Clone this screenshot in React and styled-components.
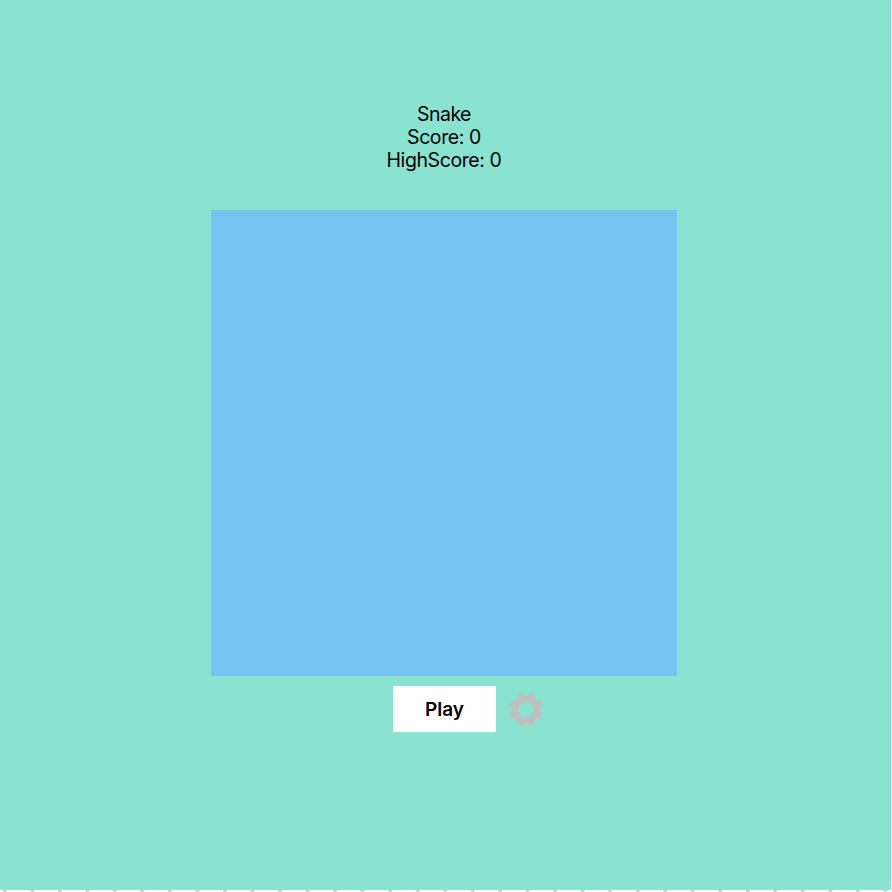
import React from "react";
import styled, { createGlobalStyle } from "styled-components";

const GlobalStyle = createGlobalStyle`
  body { margin: 0; background: #fff; overflow: hidden; }
  * { box-sizing: border-box; }
`;

const Page = styled.main`
  width: 891px;
  height: 890px;
  padding: 103px 3px 0 0;
  display: flex;
  flex-direction: column;
  align-items: center;
  background: #8ae2d0;
  color: #000;
  font-family: Inter, "Liberation Sans", sans-serif;
`;

const Scoreboard = styled.header`
  display: flex;
  flex-direction: column;
  align-items: center;
  height: 107px;
  font-size: 19.5px;
  line-height: 23px;
`;

const Line = styled.div`
  white-space: pre;
  letter-spacing: ${(p) => p.$spacing || 0}px;
`;

const Board = styled.section`
  width: 466px;
  height: 466px;
  background: #75c3f1;
`;

const Controls = styled.div`
  display: grid;
  grid-template-columns: 1fr 103px 1fr;
  align-items: center;
  width: 465px;
  margin: 10px 0 0 1px;
`;

const PlayButton = styled.button`
  grid-column: 2;
  height: 46px;
  padding: 1px 0 0;
  border: 0;
  background: #fff;
  color: #000;
  font: 600 19px/45px Inter, "Liberation Sans", sans-serif;
`;

const SettingsButton = styled.button`
  display: flex;
  width: 34px;
  margin: 0 0 0 13px;
  padding: 0;
  border: 0;
  background: none;
  color: #c0c0c0;
`;

const Footer = styled.div`
  width: 891px;
  height: 2px;
  background: radial-gradient(ellipse 2.8px 2.6px at 4.8px 0, #cecece 60%, #fff 100%) 0 0 / 27.53px 2px repeat-x;
`;

const teeth = [22.5, 67.5, 112.5, 157.5, 202.5, 247.5, 292.5, 337.5];

function Gear() {
  return (
    <svg width="34" height="34" viewBox="-17 -17.4 34 34" fill="currentColor">
      <circle r="10.7" fill="none" stroke="currentColor" strokeWidth="6" />
      {teeth.map((angle) => (
        <path
          key={angle}
          transform={`rotate(${angle})`}
          d="M-4-11.5L-3.2-16Q-3-16.8-2.2-16.8H2.2Q3-16.8 3.2-16L4-11.5Z"
        />
      ))}
    </svg>
  );
}

export default function App() {
  return (
    <>
      <GlobalStyle />
      <Page>
        <Scoreboard>
          <Line $spacing={-0.55}>Snake</Line>
          <Line $spacing={-0.4}>Score: 0</Line>
          <Line $spacing={-0.4}>HighScore: 0</Line>
        </Scoreboard>
        <Board />
        <Controls>
          <PlayButton>Play</PlayButton>
          <SettingsButton aria-label="Settings">
            <Gear />
          </SettingsButton>
        </Controls>
      </Page>
      <Footer />
    </>
  );
}
